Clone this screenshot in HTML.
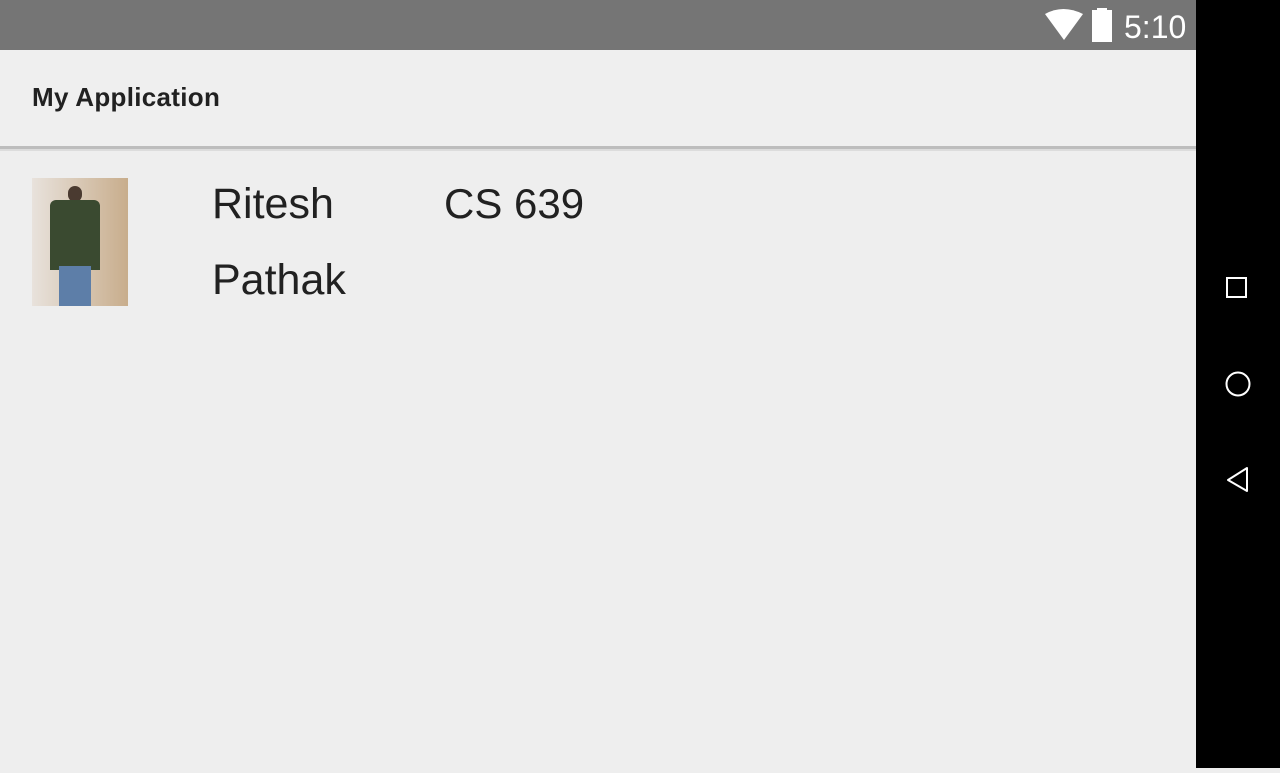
<!DOCTYPE html>
<html><head><style>
body{margin:0;width:1280px;height:768px;position:relative;background:#eeeeee;font-family:"Liberation Sans",sans-serif;overflow:hidden}
.sb{position:absolute;left:0;top:0;width:1196px;height:50px;background:#757575}
.nav{position:absolute;left:1196px;top:0;width:84px;height:768px;background:#000}
.tb{position:absolute;left:0;top:50px;width:1196px;height:96px;background:#efefef}
.line{position:absolute;left:0;top:146px;width:1196px;height:3px;background:#bdbdbd}
.line2{position:absolute;left:0;top:149px;width:1196px;height:2px;background:#dcdcdc}
.t{position:absolute;color:#212121}
.photo{position:absolute;left:32px;top:178px;width:96px;height:128px;background:linear-gradient(90deg,#e8e2dc,#c8ad8c);overflow:hidden}
</style></head><body>
<div class="sb"></div>
<svg style="position:absolute;left:1040px;top:8px" width="150" height="36">
<path d="M5 6 Q23 -4 43 6 L24 32 Z" fill="#fff"/>
<rect x="52" y="2" width="20" height="32" fill="#fff"/><rect x="57" y="0" width="10" height="3" fill="#fff"/>
<text x="84" y="30" font-family="Liberation Sans" font-size="32" fill="#fff">5:10</text>
</svg>
<div class="nav"><svg width="84" height="768">
<rect x="31" y="278" width="19" height="19" fill="none" stroke="#fff" stroke-width="2"/>
<circle cx="42" cy="384" r="11.5" fill="none" stroke="#fff" stroke-width="2"/>
<path d="M51 468 L51 491 L32 480 Z" fill="none" stroke="#fff" stroke-width="2" stroke-linejoin="round"/>
</svg></div>
<div class="tb"></div>
<div class="line"></div><div class="line2"></div>
<div class="t" style="left:32px;top:82px;font-size:26px;font-weight:bold;letter-spacing:0.3px">My Application</div>
<div class="photo">
<div style="position:absolute;left:36px;top:8px;width:14px;height:16px;border-radius:7px;background:#4a3a30"></div>
<div style="position:absolute;left:18px;top:22px;width:50px;height:70px;background:#3a4a30;border-radius:6px 6px 0 0"></div>
<div style="position:absolute;left:27px;top:88px;width:32px;height:40px;background:#5d7ea8"></div>
</div>
<div class="t" style="left:212px;top:180px;font-size:43px">Ritesh</div>
<div class="t" style="left:212px;top:256px;font-size:43px">Pathak</div>
<div class="t" style="left:444px;top:180px;font-size:42px">CS 639</div>
</body></html>
